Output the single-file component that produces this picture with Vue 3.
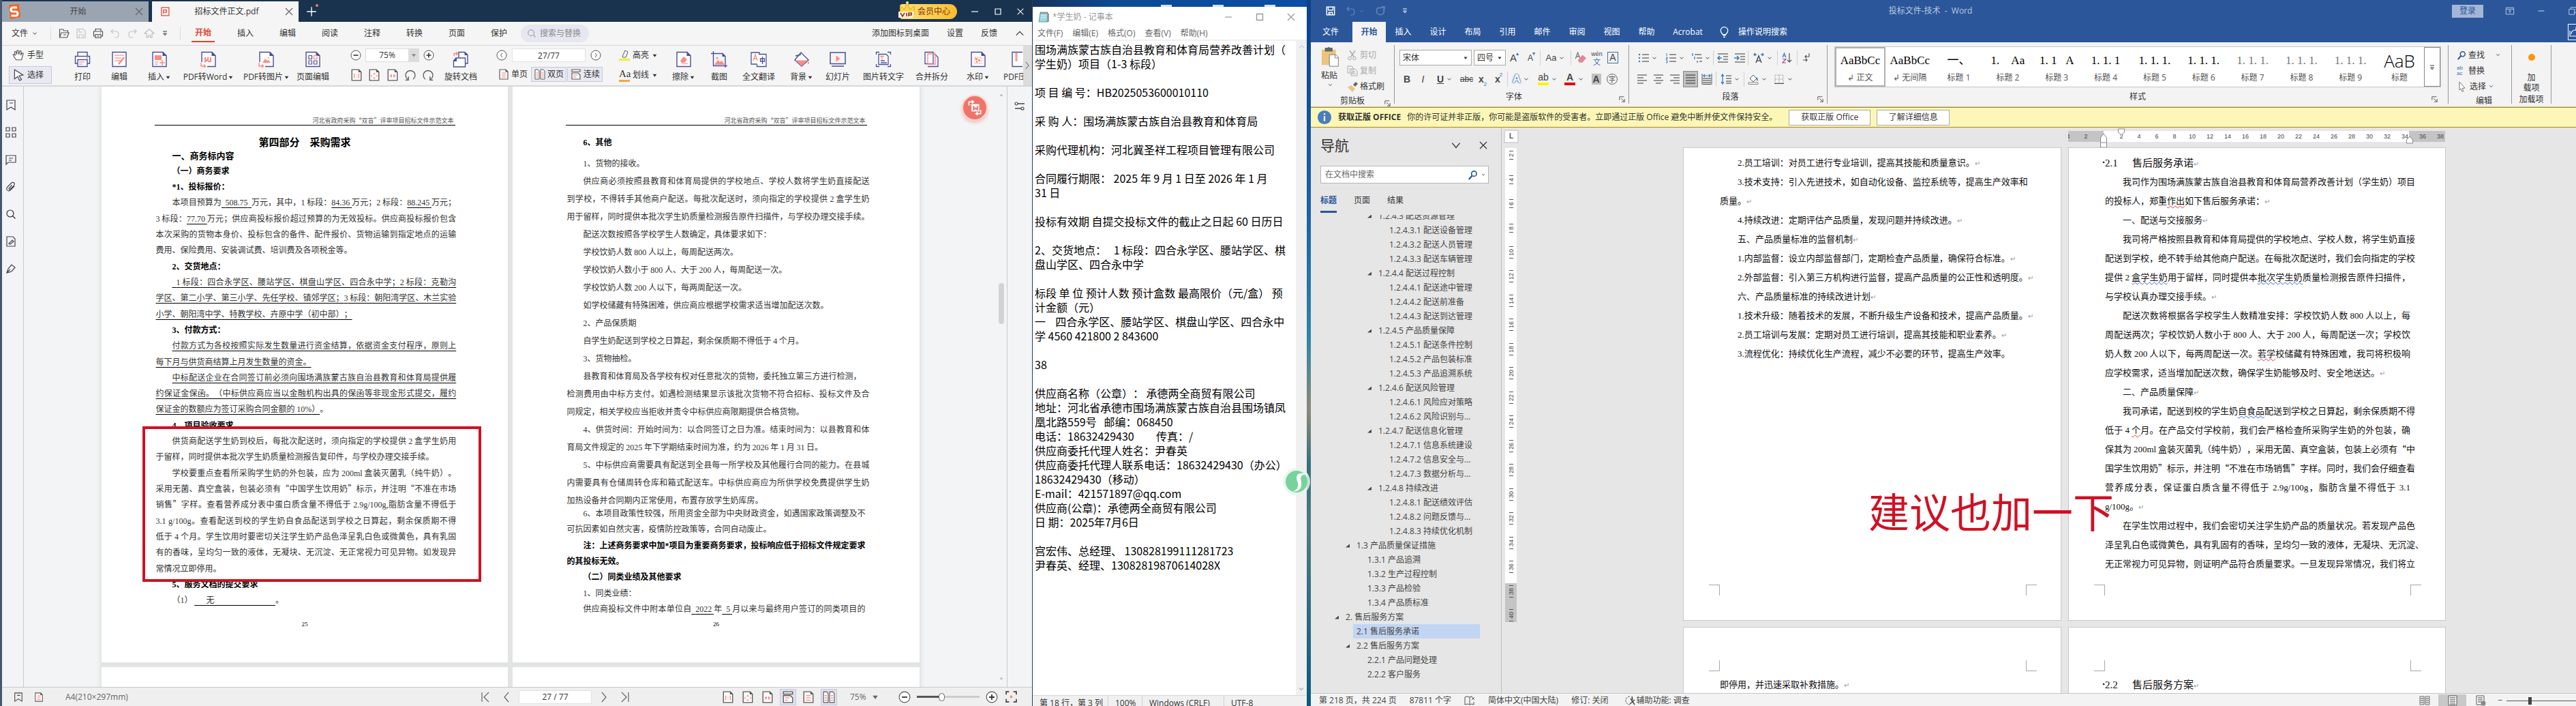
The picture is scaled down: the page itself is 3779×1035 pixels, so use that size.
<script setup>
import { h } from 'vue'

const P = '#4a4f9b'
const R = '#ff8a80'
const G = '#5a5a5a'
const B = '#3c7ab8'

const sheet = `<path d="M2 1.5h15l5 5v16H2z" fill="#fff" stroke="${P}" stroke-width="1.4"/><path d="M16.500 1l6 6h-6z" fill="${P}"/>`
const small = `<path d="M2 1h9l3 3v11H2z" fill="#fff" stroke="${G}" stroke-width="1.2"/><path d="M10.500 .5l4 4h-4z" fill="${G}"/>`
const rows = (x, w, ys, c) => ys.map(y => `<path d="M${x} ${y}h${w}" stroke="${c}" stroke-width="1.200"/>`).join('')

const icons = {
  logo: '<path d="M4 2l15-1 2 19-15 3z" fill="#f26522"/><path d="M16 6H10q-3 0-3 3t3 3h4q3 0 3 3t-3 3H7.500" fill="none" stroke="#fff" stroke-width="3"/>',
  pdf: '<path d="M2.500 1.500h11l3 0v15h-14z" fill="#fff" stroke="#e8412f" stroke-width="1.600"/><path d="M6 13V6h6v4H7M12 6v4" fill="none" stroke="#e8412f" stroke-width="1.600"/>',
  close: '<path d="M3 3l10 10M13 3L3 13" stroke="currentColor" stroke-width="1.200"/>',
  plus: '<path d="M8 2v12M2 8h12" stroke="currentColor" stroke-width="1.200"/>',
  min: '<path d="M3 8h10" stroke="currentColor" stroke-width="1.200"/>',
  max: '<path d="M4 4h8v8H4z" fill="none" stroke="currentColor" stroke-width="1.200"/>',
  restore: '<path d="M2 5h9v9H2zM5 5V2h9v9h-3" fill="none" stroke="currentColor"/>',
  ribbonopt: '<path d="M1.500 2.500h13v11h-13zM1.500 5h13M8 12V7M5.500 9L8 6.500 10.500 9" fill="none" stroke="currentColor"/>',
  chev: '<path d="M4 6l4 4 4-4" fill="none" stroke="currentColor" stroke-width="1.600"/>',
  thin: '<path d="M3 5l5 6 5-6" fill="none" stroke="currentColor" stroke-width="1.200"/>',
  chevUp: '<path d="M2 11l6-6 6 6" fill="none" stroke="currentColor" stroke-width="1.400"/>',
  chevL: '<path d="M11 1L5 8l6 7" fill="none" stroke="currentColor" stroke-width="1.200"/>',
  chevR: '<path d="M5 1l6 7-6 7" fill="none" stroke="currentColor" stroke-width="1.200"/>',
  first: '<path d="M13 1L6 8l7 7M3 1v14" fill="none" stroke="currentColor" stroke-width="1.200"/>',
  last: '<path d="M3 1l7 7-7 7M13 1v14" fill="none" stroke="currentColor" stroke-width="1.200"/>',
  tri: '<path d="M3 5h10l-5 7z" fill="currentColor"/>',
  triUp: '<path d="M3 12h10L8 5z" fill="currentColor"/>',
  node: '<path d="M14 3v10H2z" fill="currentColor"/>',
  open: '<path d="M1.500 14V2h5l1 2h6v3M1.500 14L4 7h11l-2.500 7zM7 10h4" fill="none" stroke="#555" stroke-width="1.200"/>',
  save: '<path d="M2 1.500h9l3 3v10H2zM5 2v4h5M5 14v-4h6v4" fill="none" stroke="currentColor" stroke-width="1.200"/>',
  print: '<path d="M4 5V1.500h8V5M4 12H1.500V5h13v7H12M4 9.500h8v5H4zM6 12h4M11 7h1" fill="none" stroke="#555" stroke-width="1.200"/>',
  undo: '<path d="M5 2L2 5l3 3M2 5h7q4 0 4 4.500T9 14H7" fill="none" stroke="currentColor" stroke-width="1.200"/>',
  redo: '<path d="M11 2l3 3-3 3M14 5H7q-4 0-4 4.500T7 14h2" fill="none" stroke="currentColor" stroke-width="1.200"/>',
  repeat: '<path d="M10 2h4v4M13.500 2.500Q9 4 4 3.500 1 8 4 12q4 3.500 8 0 3-4 0-7" fill="none" stroke="currentColor" stroke-width="1.600"/>',
  home: '<path d="M1 8l7-6.500L15 8h-3v6H9.500v-3h-3v3H4V8z" fill="none" stroke="#bbb" stroke-width="1.200"/>',
  custom: '<path d="M4 4h8M5 8h6l-3 4z" fill="none" stroke="currentColor" stroke-width="1.300"/>',
  lens: '<circle cx="7" cy="7" r="5" fill="none" stroke="currentColor" stroke-width="1.200"/><path d="M10.500 10.500l4 4" stroke="currentColor" stroke-width="1.200"/>',
  lensBlue: `<circle cx="10" cy="6" r="4" fill="none" stroke="#2b579a" stroke-width="1.800"/><path d="M7 9l-5 6" stroke="#2b579a" stroke-width="2.500"/>`,
  hand: '<path d="M5 14Q2 10 1 7q1.500-1 3 1.500L3 3.500q1.300-1 2 .5l1 3L6 2q1.500-1 2 .3L8.500 7 10 2.500q1.500-.5 1.600 1L11 8l2-3q1.500 0 1.200 1.500L12 14z" fill="#fff" stroke="#555"/>',
  arrow: '<path d="M3 1l11 7-5 1 3 5-2.500 1L7 10l-4 3z" fill="#fff" stroke="#555" stroke-width="1.200"/>',
  bPrint: `<path d="M5 8V1.500h14V8M5 18H1.500V7.500h21V18H19M5 12.500h14v10H5z" fill="#fff" stroke="${P}" stroke-width="1.400"/><path d="M18 10h2" stroke="${P}"/>${rows(7, 8, [16], R)}${rows(7, 5, [19], R)}`,
  bEdit: `<path d="M2 1.500h20v21H2z" fill="#fff" stroke="${P}" stroke-width="1.400"/>${rows(5, 14, [6], R)}${rows(5, 10, [10, 14], R)}<path d="M11 19l8-10" stroke="${R}" stroke-width="2.500"/>`,
  bInsert: `${sheet}<path d="M5 6h10v7H5z" fill="${R}"/>${rows(5, 5, [16, 19], R)}<path d="M12 17h8M16 13v8" stroke="${R}" stroke-width="1.500"/>`,
  bWord: `<path d="M2 16V1.500h15l5 5v16H10" fill="#fff" stroke="${P}" stroke-width="1.400"/><path d="M16.500 1l6 6h-6z" fill="${P}"/><path d="M7 9v6l3-2 2 2 3 0V9M11 9v5" fill="none" stroke="${R}" stroke-width="2.200"/><path d="M1 17v5h6M5 19.500L7.500 22 5 24" fill="none" stroke="${R}" stroke-width="1.400"/>`,
  bPic: `<path d="M2 16V1.500h15l5 5v16H10" fill="#fff" stroke="${P}" stroke-width="1.400"/><path d="M16.500 1l6 6h-6z" fill="${P}"/><path d="M6 17l4-6 3 3 2-1 3 4z" fill="${R}"/><circle cx="15" cy="10" r="1" fill="${R}"/><path d="M1 17v5h6M5 19.500L7.500 22 5 24" fill="none" stroke="${R}" stroke-width="1.400"/>`,
  bGrid: `${sheet}<path d="M6 6.500h4.500v5H6zM6 14h4.500v5H6zM13.500 14H18v5h-4.500z" fill="none" stroke="${P}" stroke-width="1.200"/><path d="M13.500 6.500H18v5h-4.500z" fill="none" stroke="${R}" stroke-width="1.200"/>`,
  bRotate: `<path d="M9 9V1.500h9l4 4V18h-3" fill="#fff" stroke="${P}" stroke-width="1.400"/><path d="M17.500 1l5 5h-5z" fill="${P}"/><path d="M1.500 14V23h17V10H5z" fill="#fff" stroke="${P}" stroke-width="1.400"/><path d="M6 9.500L1 15h5z" fill="${P}"/><path d="M2 7V3.500h5M5 1l2.500 2.500L5 6" fill="none" stroke="${R}" stroke-width="1.400"/>`,
  bErase: `${sheet}<path d="M7 14l5-6 5 4-4 5H9z" fill="${R}"/><path d="M9 18.500h9" stroke="${R}"/>`,
  bCrop: `<path d="M3.500 0v21.500H24M0 3.500h17l4 4V24" fill="none" stroke="${P}" stroke-width="1.400"/><path d="M16.500 3l5 5h-5z" fill="${P}"/><path d="M5 20l5-7 3 3 3-2 4 6z" fill="${R}"/><circle cx="9" cy="10" r="1.500" fill="${R}"/>`,
  bTrans: `<path d="M1 2h12v17H1z" fill="#fff" stroke="${P}" stroke-width="1.300"/><path d="M12 4.500h11v18H9.500v-3" fill="#fff" stroke="${P}" stroke-width="1.300"/><path d="M4 14L7 5l3 9M5 11h4" fill="none" stroke="${R}" stroke-width="1.300"/><path d="M14.500 11h6v4h-6zM17.500 8v11" fill="none" stroke="${P}" stroke-width="1.300"/>`,
  bFill: `<path d="M11 2l11 11-10 9L2 13z" fill="#fff" stroke="${P}" stroke-width="1.400"/><path d="M3 13.500h18L12 22z" fill="${R}"/><path d="M3 7l8-2" stroke="${P}" stroke-width="1.400"/><path d="M22 15q2 3 0 4-2-1 0-4" fill="${R}"/>`,
  bSlide: `<path d="M1 2h22v16.500H1zM3 22h18" fill="none" stroke="${P}" stroke-width="1.500"/><path d="M9.500 6.500l6 4.500-6 4.500z" fill="${R}"/>`,
  bOcr: `<path d="M5 4.500h11l3 3v12H5z" fill="#fff" stroke="${P}" stroke-width="1.300"/><path d="M1.500 5V1.500H6M18 1.500h4.500V5M1.500 19v3.500H6M18 22.500h4.500V19M8 14h6M8 17h9" fill="none" stroke="${P}" stroke-width="1.300"/><path d="M7 7.500h6M10 7.500V12" stroke="${R}" stroke-width="1.300"/>`,
  bMerge: `<path d="M2 1.500h12v17H2z" fill="#fff" stroke="${P}" stroke-width="1.300"/><path d="M15 3l6 6v13.500H6" fill="none" stroke="${P}" stroke-width="1.300"/><path d="M6 4h11v15H6z" fill="none" stroke="${R}" stroke-width="1.300"/>`,
  bMark: `${sheet}<path d="M7 9h10v9H7z" fill="none" stroke="${R}" stroke-dasharray="2 1.500"/><path d="M8 10h3v3H8zM12 12h3v3h-3zM9 14h2v3H9z" fill="${R}"/>`,
  bZip: `<path d="M17 1.500H2v21h15" fill="#fff" stroke="${P}" stroke-width="1.400"/><path d="M8 2v13M6 4h4M6 7h4M6 10h4M6 13h4" stroke="${R}" stroke-width="1.300"/>`,
  minusC: '<circle cx="8" cy="8" r="7" fill="#fff" stroke="#555"/><path d="M4.500 8h7" stroke="#333" stroke-width="1.600"/>',
  plusC: '<circle cx="8" cy="8" r="7" fill="#fff" stroke="#555"/><path d="M4.500 8h7M8 4.500v7" stroke="#333" stroke-width="1.600"/>',
  prevC: '<circle cx="8" cy="8" r="7" fill="#fff" stroke="#555"/><path d="M9 5L6.500 8 9 11" fill="none" stroke="#555"/>',
  nextC: '<circle cx="8" cy="8" r="7" fill="#fff" stroke="#555"/><path d="M7 5l2.500 3L7 11" fill="none" stroke="#555"/>',
  one: `${small}<path d="M5 6v6M8 7.500v1M8 10v1M11 6v6" stroke="${R}" stroke-width="1.200"/>`,
  fit: `${small}<path d="M8 5l2 2H6zM8 13l2-2H6zM5 7v4L3.500 9zM11 7v4L12.500 9z" fill="${R}"/>`,
  wide: `${small}<path d="M7 6.500v5L4 9zM9 6.500v5L12 9z" fill="${R}"/>`,
  rotL: '<path d="M4.500 13.500A6.200 6.200 0 1 1 11.500 13.500M5.500 10v4.500H1.500" fill="none" stroke="#555" stroke-width="1.200"/>',
  rotR: '<path d="M4.500 13.500A6.200 6.200 0 1 1 11.500 13.500M10.500 10v4.500h4" fill="none" stroke="#555" stroke-width="1.200"/>',
  single: `${small}${rows(5, 6, [6, 9, 12], R)}`,
  double: `<path d="M1 1h4l2 2v12H1zM9 1h4l2 2v12H9z" fill="#fff" stroke="${G}"/>${rows(2.5, 3, [6, 9, 12], R)}${rows(10.5, 3, [6, 9, 12], R)}`,
  cont: `<path d="M2 1h12v3H2zM2 15V6h9l3 3v6z" fill="#fff" stroke="${G}" stroke-width="1.200"/>${rows(4, 6, [9], R)}${rows(4, 4, [12], R)}`,
  hilite: '<path d="M5 10l4-9 4 2-3 8H6z" fill="#fff" stroke="#555"/><path d="M0 14.500h16" stroke="#f4ef2e" stroke-width="3"/>',
  expand: `<path d="M1 5V1h4M11 1h4v4M1 11v4h4M11 15h4v-4" fill="none" stroke="#555" stroke-width="1.800"/><circle cx="8" cy="8" r="1.800" fill="${R}"/>`,
  bookmark: '<path d="M2 1h12v14l-6-4-6 4zM6 5h5" fill="none" stroke="#444" stroke-width="1.200"/>',
  thumbs: '<path d="M1 1h5v5H1zM10 1h5v5h-5zM1 10h5v5H1zM10 10h5v5h-5z" fill="none" stroke="#444" stroke-width="1.200"/>',
  note: '<path d="M1 15V2h14v10H4zM5 6h6M5 9h4" fill="none" stroke="#444" stroke-width="1.200"/>',
  clip: '<path d="M13 7l-6 6q-3 2-5-1-1-2 1-4l6-6q2-1.500 4 .5 1 2-.5 3.500l-5.500 5.500q-1.500.5-2-1l4.500-5" fill="none" stroke="#444" stroke-width="1.200"/>',
  sig: '<path d="M2 1h9l3 3v11H2zM5 11l5-5 2 2-5 4z" fill="none" stroke="#444" stroke-width="1.200"/>',
  pen: '<path d="M2 14l2-6 5-6 5 4-5 6zM2 14l5-5" fill="none" stroke="#444" stroke-width="1.200"/>',
  tune: '<path d="M5 5h10M1 12h9" stroke="#444" stroke-width="1.400"/><circle cx="3" cy="5" r="2" fill="#fff" stroke="#444" stroke-width="1.200"/><circle cx="12" cy="12" r="2" fill="#fff" stroke="#444" stroke-width="1.200"/>',
  toWord: '<path d="M4 9V4h6M8 2l2.500 2L8 6M20 15v5h-6M16 18l-2.500 2 2.500 2" fill="none" stroke="#fff" stroke-width="1.500"/><path d="M6 8h2v8h10" fill="none" stroke="#fff"/><path d="M8 7h10v10H8z" fill="#fff"/><path d="M10.500 9.500v5l2.500-2 2.500 2v-5" fill="none" stroke="#ee7468" stroke-width="1.800"/>',
  notepad: '<path d="M3 2h11l-1 13H1z" fill="#9fd8e4" stroke="#5d9aa8"/><path d="M13 15l2-1V3" fill="none" stroke="#8a7a50" stroke-width="1.500"/><path d="M3 1.500h11" stroke="#555" stroke-width="2" stroke-dasharray="1 1"/><path d="M4 6h8M4 9h8" stroke="#d6f0f5"/>',
  swirl: '<circle cx="20" cy="20" r="20" fill="#e8f3ee" opacity=".85"/><circle cx="20" cy="20" r="16" fill="#77d39b"/><path d="M34 9q-13-4-14 5 0 4 2 8 2 9-8 13 14-1 13-11 0-5-1-8 0-6 8-7z" fill="#fff"/>',
  qSave: '<path d="M1.500 1.500h13v13h-13zM4 1.500v5h8v-5M5 14.500v-4h6v4M7 12v2" fill="none" stroke="#fff" stroke-width="1.600"/>',
  bulb: '<path d="M6 12h4M6.500 14.500h3M6 11Q3 8 3 5.500A5 5 0 0 1 13 5.500Q13 8 10 11z" fill="none" stroke="#fff" stroke-width="1.200"/>',
  share: '<path d="M2 6v8h10M4 11q0-6 7-6V2l4 4" fill="none" stroke="#fff" stroke-width="1.200"/>',
  paste: '<path d="M1 4h22v24H1z" fill="#ecc47c"/><path d="M6 1h4q2-2 4 0h4v6H6z" fill="#666"/><path d="M13 12h10l4 4v14H13z" fill="#fff" stroke="#777"/><path d="M22 12v5h5" fill="none" stroke="#777"/>',
  cut: '<path d="M4 1l6 9M12 1L6 10" stroke="#aaa" stroke-width="1.500"/><circle cx="4" cy="12.500" r="2.300" fill="none" stroke="#aaa"/><circle cx="11" cy="12.500" r="2.300" fill="none" stroke="#aaa"/>',
  copy: '<path d="M1 1h6l2 2v8H1zM6 5h6l3 3v7H6zM3 5h3M3 8h2M8 9h4M8 12h5" fill="none" stroke="#aaa"/>',
  brush: '<path d="M9 5l4-4 3 3-4 4z" fill="#666"/><path d="M1 9l5-3 6 5-4 5z" fill="#ecc47c"/>',
  erase: '<path d="M2 9L5 1l3 8M3 6h4" fill="none" stroke="#777" stroke-width="1.200"/><path d="M5 11l6-7 5 4-5 6H7z" fill="#e7849a"/>',
  bullets: `<circle cx="2" cy="3" r="1.200" fill="${B}"/><circle cx="2" cy="8" r="1.200" fill="${B}"/><circle cx="2" cy="13" r="1.200" fill="${B}"/>${rows(6, 10, [3, 8, 13], '#555')}`,
  numbers: `<path d="M2 1v4M1 7h2v2H1v1h2M1 12h2v3H1" fill="none" stroke="${B}"/>${rows(6, 10, [3, 8, 13], '#555')}`,
  multi: `<path d="M2 1v4M5 6v4M9 12v3" stroke="${B}" stroke-width="1.300"/>${rows(5, 10, [3], '#555')}${rows(8, 8, [8], '#555')}${rows(12, 4, [13], '#555')}`,
  outdent: `${rows(1, 15, [2, 14], '#555')}${rows(9, 7, [6, 10], '#555')}<path d="M7 8H1M4 5L1 8l3 3" fill="none" stroke="${B}" stroke-width="1.600"/>`,
  indent: `${rows(1, 15, [2, 14], '#555')}${rows(9, 7, [6, 10], '#555')}<path d="M0 8h6M4 5l3 3-3 3" fill="none" stroke="${B}" stroke-width="1.600"/>`,
  asian: `<path d="M4 15L8 5l4 10M5.500 12h5" fill="none" stroke="#555" stroke-width="1.600"/><path d="M5 3H1M3 1L1 3l2 2M11 3h4M13 1l2 2-2 2" fill="none" stroke="${B}" stroke-width="1.300"/>`,
  sort: `<path d="M1 7l2.500-6L6 7M2 5h3" fill="none" stroke="${B}" stroke-width="1.200"/><path d="M1 9.500h5L1 15h5" fill="none" stroke="#9b4fa8" stroke-width="1.200"/><path d="M11 1v13M8 11l3 3 3-3" fill="none" stroke="#555" stroke-width="1.200"/>`,
  marks: '<path d="M13 1v5H7M9 4L7 6l2 2M4 11h6M8 9l2 2-2 2" fill="none" stroke="#555" stroke-width="1.200"/>',
  alL: rows(1, 14, [2, 10], '#555') + rows(1, 9, [6, 14], '#555'),
  alC: rows(1, 14, [2, 10], '#555') + rows(4, 8, [6, 14], '#555'),
  alR: rows(1, 14, [2, 10], '#555') + rows(6, 9, [6, 14], '#555'),
  alJ: rows(1, 14, [2, 6, 10, 14], '#444'),
  alD: `${rows(2, 12, [7, 10, 13, 15.5], '#555')}<path d="M1 0v16M15 0v16" stroke="#555"/><path d="M2 3h12M5 1L3 3l2 2M11 1l2 2-2 2" fill="none" stroke="${B}" stroke-width="1.200"/>`,
  spacing: `${rows(8, 8, [3, 7, 11, 14], '#555')}<path d="M3 1v14M1 4l2-3 2 3M1 12l2 3 2-3" fill="none" stroke="${B}" stroke-width="1.300"/>`,
  shade: `<path d="M3 7l5-5 5 5-5 5z" fill="#fff" stroke="#555"/><path d="M13 5q3 3 1 6-2-2-1-6" fill="${B}"/><path d="M1 13h14v2.500H1z" fill="#fff" stroke="#888"/>`,
  borders: '<path d="M2 2h12v12H2zM8 2v12M2 8h12" fill="none" stroke="#777" stroke-dasharray="1 1.500"/><path d="M1 14.500h14" stroke="#444"/>',
  launch: '<path d="M1 7V1h8M4 4l6 6M10 5v5H5" fill="none" stroke="#555" stroke-width="1.200"/>',
  pointer: '<path d="M4 1l8 9-4 .5 2 4-2 .8-2-4.300-2 2z" fill="#fff" stroke="#777"/>',
  spell: '<path d="M1 3q4-2 7 0v11q-3-2-7 0zM8 3q2-1 4-1M8 14q3-2 6 0v-4M11 3l4 4M15 3l-4 4" fill="none" stroke="#555"/>',
  access: '<path d="M7 2a6 6 0 1 0 0 12" fill="none" stroke="#555" stroke-dasharray="3 1"/><path d="M8 5l6 9M14 7l-7 6M10 2l1 5" stroke="#444" stroke-width="1.500"/>',
  read: `<path d="M1 2h6v12H1zM9 2h6v12H9z" fill="none" stroke="#666"/>${rows(2, 4, [5, 8, 11], '#666')}${rows(10, 4, [5, 8, 11], '#666')}`,
  layout: `<path d="M2 1h12v14H2z" fill="#fff" stroke="#555"/>${rows(4, 8, [4, 7, 10, 13], '#555')}`,
  web: `<path d="M2 1h11v13H2z" fill="#fff" stroke="#555"/>${rows(4, 7, [4, 7, 10], '#555')}<circle cx="12" cy="12" r="3.500" fill="#888"/>`,
  info: '<circle cx="12" cy="12" r="11" fill="#4a7cc0"/><path d="M12 10v8M12 5.500v2.500" stroke="#fff" stroke-width="2.500"/>',
  crown: '<path d="M2 20L3 8l6 5 4-11 4 11 6-5 1 12z" fill="#ffd24a" stroke="#e2a416"/><circle cx="13" cy="3" r="2" fill="#ffe79a"/><path d="M0 16h24l-3 9H0z" fill="#fdf1dc"/><path d="M3 18l3 5 3-5M12 18v5M15 23v-5h4v3h-4" fill="none" stroke="#8a3a10" stroke-width="1.600"/>'
}

const boxes = { logo: 24, swirl: 40, paste: 32, info: 24, crown: 26, toWord: 24, pdf: 18, launch: 11 }
const Icon = ({ n, s }) => {
  const v = boxes[n] || (/^b[A-Z]/.test(n) ? 24 : 16)
  return h('svg', { viewBox: `0 0 ${v} ${v}`, width: s || 16, height: s || 16, 'aria-hidden': 'true', innerHTML: icons[n] })
}
Icon.props = ['n', 's']

/* Splits a line into styled runs: [u:..] underline, [r:..] red wave, [b:..] blue wave. */
const runs = text => {
  const out = []
  for (const part of text.split(/(\[[urb]:[^\]]*\])/)) {
    if (!part) continue
    const m = part.match(/^\[([urb]):([^\]]*)\]$/)
    const body = m ? m[2] : part
    for (const piece of body.split(/([!-~]+(?: [!-~]+)*)/)) {
      if (piece) out.push({ t: piece, c: [m ? 'k-' + m[1] : '', /^[!-~]/.test(piece) ? 'lat' : ''] })
    }
  }
  return out
}
const Line = ({ t }) => runs(t).map(r => h('span', { class: r.c }, r.t))
Line.props = ['t']

const foxitMenu = ['开始', '插入', '编辑', '阅读', '注释', '转换', '页面', '保护']
const toolsA = [
  { i: 'bPrint', t: '打印', w: 54 }, { i: 'bEdit', t: '编辑', w: 54 }, { i: 'bInsert', t: '插入', d: 1, w: 64 },
  { i: 'bWord', t: 'PDF转Word', d: 1, w: 80 }, { i: 'bPic', t: 'PDF转图片', d: 1, w: 90 }, { i: 'bGrid', t: '页面编辑', w: 46 }
]
const toolsB = [
  { i: 'bErase', t: '擦除', d: 1, w: 50 }, { i: 'bCrop', t: '截图', w: 54 }, { i: 'bTrans', t: '全文翻译', w: 62 },
  { i: 'bFill', t: '背景', d: 1, w: 64 }, { i: 'bSlide', t: '幻灯片', w: 42 }, { i: 'bOcr', t: '图片转文字', w: 92 },
  { i: 'bMerge', t: '合并拆分', w: 50 }, { i: 'bMark', t: '水印', d: 1, w: 86 }, { i: 'bZip', t: 'PDF压缩', w: 34 }
]
const rail = ['bookmark', 'thumbs', 'note', 'clip', 'lens', 'sig', 'pen']

/* i: first-line indent, j: fills the measure, b: bold, u: whole line underlined */
const left = [
  { t: '（一）商务要求', i: 1, b: 1 },
  { t: '*1、投标报价：', i: 1, b: 1 },
  { t: '本项目预算为[u:\u00a0\u00a0508.75\u00a0\u00a0]万元，其中，1 标段：[u:84.36\u00a0]万元；2 标段：[u:88.245\u00a0]万元；', i: 1, j: 1 },
  { t: '3 标段：[u:77.70\u00a0]万元；供应商投标报价超过预算的为无效投标。供应商投标报价包含', j: 1 },
  { t: '本次采购的货物本身价、投标包含的备件、配件报价、货物运输到指定地点的运输', j: 1 },
  { t: '费用、保险费用、安装调试费、培训费及各项税金等。' },
  { t: '2、交货地点：', i: 1, b: 1 },
  { t: '\u00a0\u00a01 标段：四合永学区、腰站学区、棋盘山学区、四合永中学；2 标段：克勒沟', i: 1, j: 1, u: 1 },
  { t: '学区、第二小学、第三小学、先任学校、镇郊学区；3 标段：朝阳湾学区、木兰实验', j: 1, u: 1 },
  { t: '小学、朝阳湾中学、特教学校、卉原中学（初中部）；', u: 1 },
  { t: '3、付款方式：', i: 1, b: 1 },
  { t: '付款方式为各校按照实际发生数量进行资金结算，依据资金支付程序，原则上', i: 1, j: 1, u: 1 },
  { t: '每下月与供货商结算上月发生数量的资金。', u: 1 },
  { t: '中标配送企业在合同签订前必须向围场满族蒙古族自治县教育和体育局提供履', i: 1, j: 1, u: 1 },
  { t: '约保证金保函。（中标供应商应当以金融机构出具的保函等非现金形式提交，履约', j: 1, u: 1 },
  { t: '[u:保证金的数额应为签订采购合同金额的 10%）]。' },
  { t: '4、项目验收要求', i: 1, b: 1 },
  { t: '供货商配送学生奶到校后，每批次配送时，须向指定的学校提供 2 盒学生奶用', i: 1, j: 1 },
  { t: '于留样，同时提供本批次学生奶质量检测报告复印件，与学校办理交接手续。' },
  { t: '学校要重点查看所采购学生奶的外包装，应为 200ml 盒装灭菌乳（纯牛奶）。', i: 1, j: 1 },
  { t: '采用无菌、真空盒装，包装必须有“中国学生饮用奶”标示，并注明“不准在市场', j: 1 },
  { t: '销售”字样。查看营养成分表中蛋白质含量不得低于 2.9g/100g,脂肪含量不得低于', j: 1 },
  { t: '3.1 g/100g。查看配送到校的学生奶自食品配送到学校之日算起，剩余保质期不得', j: 1 },
  { t: '低于 4 个月。学生饮用时要密切关注学生奶产品色泽呈乳白色或微黄色，具有乳固', j: 1 },
  { t: '有的香味，呈均匀一致的液体，无凝块、无沉淀、无正常视力可见异物。如发现异', j: 1 },
  { t: '常情况立即停用。' },
  { t: '5、服务文档的提交要求', i: 1, b: 1 },
  { t: '（1） [u:\u3000\u00a0\u00a0无\u3000\u3000\u3000\u3000\u3000\u3000\u3000\u00a0\u00a0]。', i: 1 }
]
const rightA = [
  { t: '1、货物的接收。', i: 1 },
  { t: '供应商必须按照县教育和体育局提供的学校地点、学校人数将学生奶直接配送', i: 1, j: 1 },
  { t: '到学校，不得转手其他商户配送。每批次配送时，须向指定的学校提供 2 盒学生奶', j: 1 },
  { t: '用于留样，同时提供本批次学生奶质量检测报告原件扫描件，与学校办理交接手续。' },
  { t: '配送次数按照各学校学生人数确定，具体要求如下：', i: 1 },
  { t: '学校饮奶人数 800 人以上，每周配送两次。', i: 1 },
  { t: '学校饮奶人数小于 800 人、大于 200 人，每周配送一次。', i: 1 },
  { t: '学校饮奶人数 200 人以下，每两周配送一次。', i: 1 },
  { t: '如学校储藏有特殊困难，供应商应根据学校需求适当增加配送次数。', i: 1 },
  { t: '2、产品保质期', i: 1 },
  { t: '自学生奶配送到学校之日算起，剩余保质期不得低于 4 个月。', i: 1 },
  { t: '3、货物抽检。', i: 1 },
  { t: '县教育和体育局及各学校有权对任意批次的货物，委托独立第三方进行检测，', i: 1 },
  { t: '检测费用由中标方支付。如遇检测结果显示该批次货物不符合招标、投标文件及合', j: 1 },
  { t: '同规定，相关学校应当拒收并责令中标供应商限期提供合格货物。' },
  { t: '4、供货时间：开始时间为：以合同签订之日为准。结束时间为：以县教育和体', i: 1, j: 1 },
  { t: '育局文件规定的 2025 年下学期结束时间为准，约为 2026 年 1 月 31 日。' },
  { t: '5、中标供应商需要具有配送到全县每一所学校及其他履行合同的能力。在县城', i: 1, j: 1 },
  { t: '内需要具有仓储周转仓库和箱式配送车。中标供应商应为所供学校免费提供学生奶', j: 1 },
  { t: '加热设备并合同期内正常使用，布置存放学生奶库房。' }
]
const rightB = [
  { t: '6、本项目政策性较强，所用资金全部为中央财政资金，如遇国家政策调整及不', i: 1, j: 1 },
  { t: '可抗因素如自然灾害，疫情防控政策等，合同自动废止。' },
  { t: '注：上述商务要求中加*项目为重要商务要求，投标响应低于招标文件规定要求', i: 1, j: 1, b: 1 },
  { t: '的其投标无效。', b: 1 },
  { t: '（二）同类业绩及其他要求', i: 1, b: 1 },
  { t: '1、同类业绩：', i: 1 },
  { t: '供应商投标文件中附本单位自[u:\u00a0\u00a02022\u00a0]年[u:\u00a0\u00a05\u00a0]月以来与最终用户签订的同类项目的', i: 1, j: 1 }
]
const lineClass = l => ({ ind: l.i, jus: l.j, bold: l.b, und: l.u })

const note = `围场满族蒙古族自治县教育和体育局营养改善计划（
学生奶）项目（1-3 标段）

项 目 编 号：HB2025053600010110

采 购 人：围场满族蒙古族自治县教育和体育局

采购代理机构：河北冀圣祥工程项目管理有限公司

合同履行期限： 2025 年 9 月 1 日至 2026 年 1 月
31 日

投标有效期 自提交投标文件的截止之日起 60 日历日

2、交货地点：   1 标段：四合永学区、腰站学区、棋
盘山学区、四合永中学

标段 单 位 预计人数 预计盒数 最高限价（元/盒） 预
计金额（元）
一    四合永学区、腰站学区、棋盘山学区、四合永中
学 4560 421800 2 843600

38

供应商名称（公章）： 承德两全商贸有限公司
地址：河北省承德市围场满族蒙古族自治县围场镇凤
凰北路559号   邮编：068450
电话：18632429430         传真：/
供应商委托代理人姓名：尹春英
供应商委托代理人联系电话：18632429430（办公）
18632429430（移动）
E-mail：421571897@qq.com
供应商(公章)：承德两全商贸有限公司
日 期：2025年7月6日

宫宏伟、总经理、 130828199111281723
尹春英、经理、13082819870614028X`

const wordTabs = ['文件', '开始', '插入', '设计', '布局', '引用', '邮件', '审阅', '视图', '帮助', 'Acrobat']
const paraA = [
  { i: 'bullets', w: 40, d: 1 }, { i: 'numbers', w: 40, d: 1 }, { i: 'multi', w: 36, d: 1 }, { sep: 1 },
  { i: 'outdent', w: 26 }, { i: 'indent', w: 24 }, { sep: 1 }, { i: 'asian', w: 42, d: 1 }, { sep: 1 },
  { i: 'sort', w: 28 }, { sep: 1 }, { i: 'marks', w: 24 }
]
const paraB = [
  { i: 'alL', w: 24 }, { i: 'alC', w: 24 }, { i: 'alR', w: 24 }, { i: 'alJ', w: 22, on: 1 }, { i: 'alD', w: 26 }, { sep: 1 },
  { i: 'spacing', w: 40, d: 1 }, { sep: 1 }, { i: 'shade', w: 38, d: 1 }, { i: 'borders', w: 38, d: 1 }
]
const styles = [
  { p: 'AaBbCc', t: '↲ 正文', on: 1 }, { p: 'AaBbCc', t: '↲ 无间隔' }, { p: '一、', t: '标题 1' }, { p: '1.\u00a0\u00a0\u00a0\u00a0Aa', t: '标题 2' },
  { p: '1. 1\u00a0\u00a0\u00a0A', t: '标题 3' }, { p: '1. 1. 1', t: '标题 4' }, { p: '1. 1. 1.', t: '标题 5' }, { p: '1. 1. 1.', t: '标题 6' },
  { p: '1. 1. 1.', t: '标题 7', g: 1 }, { p: '1. 1. 1.', t: '标题 8', g: 1 }, { p: '1. 1. 1.', t: '标题 9', g: 1 }, { p: 'AaB', t: '标题', big: 1 }
]
const tree = [
  ['1.2.4.3 配送资源管理', 4, 1], ['1.2.4.3.1 配送设备管理', 5], ['1.2.4.3.2 配送人员管理', 5], ['1.2.4.3.3 配送车辆管理', 5],
  ['1.2.4.4 配送过程控制', 4, 1], ['1.2.4.4.1 配送途中管理', 5], ['1.2.4.4.2 配送前准备', 5], ['1.2.4.4.3 配送到达管理', 5],
  ['1.2.4.5 产品质量保障', 4, 1], ['1.2.4.5.1 配送条件控制', 5], ['1.2.4.5.2 产品包装标准', 5], ['1.2.4.5.3 产品追溯系统', 5],
  ['1.2.4.6 配送风险管理', 4, 1], ['1.2.4.6.1 风险应对策略', 5], ['1.2.4.6.2 风险识别与...', 5],
  ['1.2.4.7 配送信息化管理', 4, 1], ['1.2.4.7.1 信息系统建设', 5], ['1.2.4.7.2 信息安全与...', 5], ['1.2.4.7.3 数据分析与...', 5],
  ['1.2.4.8 持续改进', 4, 1], ['1.2.4.8.1 配送绩效评估', 5], ['1.2.4.8.2 问题反馈与...', 5], ['1.2.4.8.3 持续优化机制', 5],
  ['1.3 产品质量保证措施', 2, 1], ['1.3.1 产品追溯', 3], ['1.3.2 生产过程控制', 3], ['1.3.3 产品检验', 3], ['1.3.4 产品质标准', 3],
  ['2. 售后服务方案', 1, 1], ['2.1 售后服务承诺', 2, 0, 1], ['2.2 售后服务方案', 2, 1], ['2.2.1 产品问题处理', 3], ['2.2.2 客户服务', 3]
].map(([t, l, open, on]) => ({ t, l, open, on }))

const hRuler = [4, 2, '', ...Array.from({ length: 19 }, (_, i) => i * 2 + 2)]
const vRuler = Array.from({ length: 20 }, (_, i) => i * 2 + 2)

const wordL = [
  { t: '2.员工培训：对员工进行专业培训，提高其技能和质量意识。', i: 1, e: 1 },
  { t: '3.技术支持：引入先进技术，如自动化设备、监控系统等，提高生产效率和', i: 1, j: 1 },
  { t: '质量。', e: 1 },
  { t: '4.持续改进：定期评估产品质量，发现问题并持续改进。', i: 1, e: 1 },
  { t: '五、产品质量标准的监督机制', i: 1, e: 1 },
  { t: '1.内部监督：设立内部监督部门，定期检查产品质量，确保符合标准。', i: 1, e: 1 },
  { t: '2.外部监督：引入第三方机构进行监督，提高产品质量的公正性和透明度。', i: 1, e: 1 },
  { t: '六、产品质量标准的持续改进计划', i: 1, e: 1 },
  { t: '1.技术升级：随着技术的发展，不断升级生产设备和技术，提高产品质量。', i: 1, e: 1 },
  { t: '2.员工培训与发展：定期对员工进行培训，提高其技能和职业素养。', i: 1, e: 1 },
  { t: '3.流程优化：持续优化生产流程，减少不必要的环节，提高生产效率。', i: 1 }
]
const wordR = [
  { t: '我司作为围场满族蒙古族自治县教育和体育局营养改善计划（学生奶）项目', i: 1, j: 1 },
  { t: '的投标人，郑重[r:作出]如下售后服务承诺：', e: 1 },
  { t: '一、配送与交接服务', i: 1, e: 1 },
  { t: '我司将严格按照县教育和体育局提供的学校地点、学校人数，将学生奶直接', i: 1, j: 1 },
  { t: '配送到学校，绝不转手给其他商户配送。在每批次配送时，我们会向指定的学校', j: 1 },
  { t: '提供 2 [b:盒学生奶]用于留样，同时提供本[b:批次学生奶]质量检测报告原件扫描件，', j: 1 },
  { t: '与学校认真办理交接手续。', e: 1 },
  { t: '配送次数将根据各学校学生人数精准安排：学校饮奶人数 800 人以上，每', i: 1, j: 1 },
  { t: '周配送两次；学校饮奶人数小于 800 人、大于 200 人，每周配送一次；学校饮', j: 1 },
  { t: '奶人数 200 人以下，每两周配送一次。[r:若学]校储藏有特殊困难，我司将积极响', j: 1 },
  { t: '应学校需求，适当增加配送次数，确保学生奶能够及时、安全地送达。', e: 1 },
  { t: '二、产品质量保障', i: 1, e: 1 },
  { t: '我司承诺，配送到校的学生奶[b:自食品]配送到学校之日算起，剩余保质期不得', i: 1, j: 1 },
  { t: '低于 4 [r:个]月。在产品交付学校前，我们会严格检查所采购学生奶的外包装，确', j: 1 },
  { t: '保其为 200ml 盒装灭菌乳（纯牛奶），采用无菌、真空盒装，包装上必须有“中', j: 1 },
  { t: '国学生饮用奶”标示，并注明“不准在市场销售”字样。同时，我们会仔细查看', j: 1 },
  { t: '营养成分表，保证蛋白质含量不得低于 2.9g/100g，脂肪含量不得低于 3.1', j: 1 },
  { t: 'g/100g。', e: 1 },
  { t: '在学生饮用过程中，我们会密切关注学生奶产品的质量状况。若发现产品色', i: 1, j: 1 },
  { t: '泽呈乳白色或微黄色，具有乳固有的香味，呈均匀一致的液体，无凝块、无沉淀、', j: 1 },
  { t: '无正常视力可见异物，则证明产品符合质量要求。一旦发现异常情况，我们将立', j: 1 }
]
</script>

<template>
  <main class="desk">
    <section class="fx" aria-label="PDF">
      <header class="fx-title">
        <button class="fx-tab"><Icon n="logo" :s="24" /><span>开始</span><Icon n="close" /></button>
        <button class="fx-tab on"><Icon n="pdf" :s="14" /><span>招标文件正文.pdf</span><Icon n="close" /></button>
        <button class="fx-new" aria-label="新建"><Icon n="plus" :s="18" /><i></i></button>
        <div class="fx-win">
          <button class="vip"><Icon n="crown" :s="26" /><span>会员中心</span></button>
          <button aria-label="最小化"><Icon n="min" /></button>
          <button aria-label="最大化"><Icon n="max" /></button>
          <button aria-label="关闭"><Icon n="close" :s="14" /></button>
        </div>
      </header>
      <nav class="fx-menu">
        <button class="file">文件<Icon n="chev" :s="10" /></button>
        <div class="quick">
          <button aria-label="打开"><Icon n="open" /></button>
          <button aria-label="保存" class="off"><Icon n="save" /></button>
          <button aria-label="打印"><Icon n="print" /></button>
          <button aria-label="撤销" class="off"><Icon n="undo" /></button>
          <button aria-label="重做" class="off"><Icon n="redo" /></button>
          <button aria-label="主页"><Icon n="home" /></button>
          <button aria-label="更多"><Icon n="custom" :s="12" /></button>
        </div>
        <button v-for="(m, i) in foxitMenu" :key="m" class="m" :class="{ on: i === 0 }">{{ m }}</button>
        <label class="pill"><Icon n="lens" :s="14" /><input placeholder="搜索与替换" aria-label="搜索与替换"></label>
        <div class="fx-right"><button>添加图标到桌面</button><button>设置</button><button>反馈</button><button aria-label="收起"><Icon n="chevUp" :s="14" /></button></div>
      </nav>
      <div class="fx-tools">
        <div class="pick"><button><Icon n="hand" :s="18" />手型</button><button class="on"><Icon n="arrow" :s="18" />选择</button></div>
        <button v-for="b in toolsA" :key="b.t" class="big" :style="{ width: b.w + 'px' }"><Icon :n="b.i" :s="24" /><span>{{ b.t }}<Icon v-if="b.d" n="tri" :s="9" /></span></button>
        <div class="zoomer">
          <div class="row"><button aria-label="缩小"><Icon n="minusC" /></button><span class="combo"><input value="75%" aria-label="缩放"><i><Icon n="tri" :s="10" /></i></span><button aria-label="放大"><Icon n="plusC" /></button></div>
          <div class="row"><button v-for="n in ['one', 'fit', 'wide', 'rotL', 'rotR']" :key="n" :aria-label="n"><Icon :n="n" :s="18" /></button></div>
        </div>
        <button class="big rot"><Icon n="bRotate" :s="24" /><span>旋转文档</span></button>
        <div class="pager">
          <div class="row"><button aria-label="上一页"><Icon n="prevC" /></button><input value="27/77" aria-label="页码"><button aria-label="下一页"><Icon n="nextC" /></button></div>
          <div class="row modes"><button><Icon n="single" />单页</button><button class="on"><Icon n="double" />双页</button><button class="on"><Icon n="cont" />连续</button></div>
        </div>
        <div class="pens"><button><Icon n="hilite" />高亮<Icon n="tri" :s="9" /></button><button><span class="aa">Aa</span>划线<Icon n="tri" :s="9" /></button></div>
        <button v-for="b in toolsB" :key="b.t" class="big" :style="{ width: b.w + 'px' }"><Icon :n="b.i" :s="24" /><span>{{ b.t }}<Icon v-if="b.d" n="tri" :s="9" /></span></button>
        <button class="more" aria-label="更多工具"><Icon n="chevR" :s="12" /></button>
      </div>
      <div class="fx-body">
        <div class="fx-rail"><button v-for="n in rail" :key="n" :aria-label="n"><Icon :n="n" :s="16" /></button></div>
        <div class="canvas">
          <div class="sheets">
            <article class="pg">
              <p class="run">河北省政府采购“双盲”评审项目招标文件示范文本</p>
              <h2>第四部分　采购需求</h2>
              <h3>一、商务标内容</h3>
              <div class="body tall"><p v-for="(l, i) in left" :key="i" :class="lineClass(l)"><Line :t="l.t" /></p></div>
              <p class="no">25</p>
              <div class="redbox"></div>
            </article>
            <article class="pg">
              <p class="run">河北省政府采购“双盲”评审项目招标文件示范文本</p>
              <h3 class="six"><span class="lat">6</span>、其他</h3>
              <div class="body loose"><p v-for="(l, i) in rightA" :key="i" :class="lineClass(l)"><Line :t="l.t" /></p></div>
              <div class="body foot"><p v-for="(l, i) in rightB" :key="i" :class="lineClass(l)"><Line :t="l.t" /></p></div>
              <p class="no">26</p>
            </article>
            <article class="pg next"></article>
            <article class="pg next"></article>
          </div>
          <div class="vbar"><Icon n="triUp" :s="8" /><i></i><Icon n="tri" :s="8" /></div>
          <button class="float" aria-label="转Word"><Icon n="toWord" :s="26" /></button>
        </div>
        <div class="fx-side"><button aria-label="属性"><Icon n="tune" /></button></div>
      </div>
      <footer class="fx-status">
        <button aria-label="导航"><Icon n="bookmark" :s="14" /></button><button aria-label="页面"><Icon n="single" :s="14" /></button>
        <span class="size">A4(210×297mm)</span>
        <div class="go">
          <button aria-label="首页"><Icon n="first" /></button><button aria-label="上一页"><Icon n="chevL" /></button>
          <input value="27 / 77" aria-label="当前页">
          <button aria-label="下一页"><Icon n="chevR" /></button><button aria-label="末页"><Icon n="last" /></button>
        </div>
        <div class="views">
          <button v-for="n in ['one', 'fit', 'wide', 'cont', 'single', 'double']" :key="n" :aria-label="n" :class="{ on: n === 'cont' || n === 'double' }"><Icon :n="n" :s="18" /></button>
          <span class="pct">75%<Icon n="tri" :s="12" /></span>
          <button aria-label="缩小"><Icon n="minusC" :s="18" /></button>
          <input type="range" min="0" max="100" value="38" aria-label="缩放">
          <button aria-label="放大"><Icon n="plusC" :s="18" /></button>
          <button aria-label="全屏"><Icon n="expand" :s="17" /></button>
        </div>
      </footer>
    </section>

    <section class="np-wrap" aria-label="记事本">
      <div class="np-top"><i></i><i></i><i></i></div>
      <div class="np">
        <header><Icon n="notepad" /><span>*学生奶 - 记事本</span>
          <div><button aria-label="最小化"><Icon n="min" /></button><button aria-label="最大化"><Icon n="max" :s="18" /></button><button aria-label="关闭"><Icon n="close" /></button></div>
        </header>
        <nav><button v-for="m in ['文件(F)', '编辑(E)', '格式(O)', '查看(V)', '帮助(H)']" :key="m">{{ m }}</button></nav>
        <div class="np-body">
          <textarea :value="note" aria-label="文本" wrap="off" spellcheck="false"></textarea>
          <div class="np-bar"><Icon n="chevUp" :s="9" /><Icon n="chev" :s="12" /></div>
        </div>
        <footer><span>第 18 行，第 3 列</span><span>100%</span><span>Windows (CRLF)</span><span>UTF-8</span></footer>
        <button class="swirl" aria-label="助手"><Icon n="swirl" :s="40" /></button>
      </div>
    </section>

    <section class="wd" aria-label="Word">
      <header class="wd-title">
        <div class="qat"><button aria-label="保存"><Icon n="qSave" :s="14" /></button><button class="dim" aria-label="撤销"><Icon n="undo" /><Icon n="chev" :s="9" /></button><button class="dim" aria-label="重复"><Icon n="repeat" /></button><button aria-label="自定义"><Icon n="custom" :s="12" /></button></div>
        <h1>投标文件-技术 &nbsp;-&nbsp; Word</h1>
        <div class="wd-win"><button class="login">登录</button><button aria-label="功能区"><Icon n="ribbonopt" :s="14" /></button><button aria-label="最小化"><Icon n="min" :s="14" /></button><button aria-label="还原"><Icon n="restore" :s="14" /></button></div>
      </header>
      <nav class="wd-tabs">
        <button v-for="(t, i) in wordTabs" :key="t" :class="{ on: i === 1 }">{{ t }}</button>
        <button class="tell"><Icon n="bulb" :s="17" />操作说明搜索</button>
        <button class="share" aria-label="共享"><Icon n="share" /></button>
      </nav>
      <div class="rb">
        <div class="g g1">
          <div class="gc">
            <button class="paste"><Icon n="paste" :s="30" /><span>粘贴</span><Icon n="chev" :s="9" /></button>
            <div class="stack"><button class="dis"><Icon n="cut" />剪切</button><button class="dis"><Icon n="copy" />复制</button><button><Icon n="brush" />格式刷</button></div>
          </div>
          <div class="gl">剪贴板<Icon n="launch" :s="9" /></div>
        </div>
        <div class="g g2">
          <div class="gr">
            <span class="sel w1"><select aria-label="字体"><option>宋体</option></select><Icon n="tri" :s="8" /></span>
            <span class="sel w2"><select aria-label="字号"><option>四号</option></select><Icon n="tri" :s="8" /></span>
            <button class="c26 f14">A<sup class="bl">▴</sup></button><button class="c26 f12">A<sup class="bl">▾</sup></button><i class="sp"></i>
            <button class="c42 f13">Aa<Icon n="chev" :s="10" /></button><i class="sp"></i>
            <button class="c26"><Icon n="erase" :s="18" /></button><button class="c26 wen"><span>wén</span><span class="bl">文</span></button><button class="c22"><b class="boxa">A</b></button>
          </div>
          <div class="gr">
            <button class="c22"><b>B</b></button><button class="c26"><em>I</em></button><button class="c38"><u><b>U</b></u><Icon n="chev" :s="10" /></button>
            <button class="c26 f12"><s>abc</s></button><button class="c22"><b>x</b><sub class="bl">2</sub></button><button class="c26"><b>x</b><sup class="bl">2</sup></button><i class="sp"></i>
            <button class="c38"><b class="glow">A</b><Icon n="chev" :s="10" /></button><button class="c38"><span class="bar y">ab</span><Icon n="chev" :s="10" /></button>
            <button class="c38"><b class="bar r">A</b><Icon n="chev" :s="10" /></button><button class="c26"><b class="grey">A</b></button><button class="c22"><span class="ring">字</span></button>
          </div>
          <div class="gl">字体<Icon n="launch" :s="9" /></div>
        </div>
        <div class="g g3">
          <div class="gr"><template v-for="(b, i) in paraA" :key="i"><i v-if="b.sep" class="sp"></i><button v-else :style="{ width: b.w + 'px' }" :aria-label="b.i"><Icon :n="b.i" /><Icon v-if="b.d" n="chev" :s="10" /></button></template></div>
          <div class="gr"><template v-for="(b, i) in paraB" :key="i"><i v-if="b.sep" class="sp"></i><button v-else :class="{ on: b.on }" :style="{ width: b.w + 'px' }" :aria-label="b.i"><Icon :n="b.i" /><Icon v-if="b.d" n="chev" :s="10" /></button></template></div>
          <div class="gl">段落<Icon n="launch" :s="9" /></div>
        </div>
        <div class="g g4">
          <div class="gallery">
            <button v-for="s in styles" :key="s.t" :class="{ on: s.on }"><span class="pv" :class="{ gy: s.g, bg: s.big }">{{ s.p }}</span><span class="nm">{{ s.t }}</span></button>
            <button class="drop" aria-label="更多样式"><Icon n="custom" :s="12" /></button>
          </div>
          <div class="gl">样式<Icon n="launch" :s="9" /></div>
        </div>
        <div class="g g5">
          <div class="stack"><button><Icon n="lensBlue" :s="14" />查找<Icon n="chev" class="far" :s="9" /></button><button><span class="abac">ab<br>ac</span>替换</button><button><Icon n="pointer" />选择<Icon n="chev" :s="9" /></button></div>
          <div class="gl">编辑</div>
        </div>
        <div class="g g6"><button class="add"><i></i><span>加</span><span>载项</span></button><div class="gl">加载项</div></div>
      </div>
      <div class="lic"><Icon n="info" :s="22" /><b>获取正版 OFFICE</b><span>你的许可证并非正版，你可能是盗版软件的受害者。立即通过正版 Office 避免中断并使文件保持安全。</span><button>获取正版 Office</button><button>了解详细信息</button></div>
      <div class="wd-body">
        <aside>
          <div class="nh"><h2>导航</h2><button aria-label="选项"><Icon n="thin" :s="18" /></button><button aria-label="关闭"><Icon n="close" :s="16" /></button></div>
          <label class="find"><input placeholder="在文档中搜索" aria-label="在文档中搜索"><Icon n="lensBlue" :s="15" /><Icon n="chev" :s="8" /></label>
          <div class="nt"><button class="on">标题</button><button>页面</button><button>结果</button></div>
          <ul class="tree"><li v-for="n in tree" :key="n.t" :class="['l' + n.l, { on: n.on }]"><Icon v-if="n.open" n="node" :s="8" /><a href="#">{{ n.t }}</a></li></ul>
        </aside>
        <div class="vr">
          <div class="tabstop">L</div>
          <div class="vrule"><div class="cells"><span v-for="n in vRuler" :key="n"><i></i><b>{{ n }}</b><i></i></span></div></div>
        </div>
        <div class="docs">
          <div class="hrow">
            <div class="hrule"><div class="cells"><span v-for="(n, i) in hRuler" :key="i">{{ n }}</span></div></div>
            <svg class="mk m1" width="12" height="28" viewBox="0 0 12 28"><path d="M1.500 20V13L6 7l4.500 6v7zM1.500 20v7h9v-7" fill="#fff" stroke="#888" /></svg>
            <svg class="mk m2" width="12" height="12" viewBox="0 0 12 12"><path d="M1.500 1h9v5L6 10 1.500 6z" fill="#fff" stroke="#888" /></svg>
            <svg class="mk m3" width="12" height="12" viewBox="0 0 12 12"><path d="M1.500 11h9V6L6 1 1.500 6z" fill="#fff" stroke="#888" /></svg>
          </div>
          <div class="papers">
            <article class="wp">
              <p v-for="(l, i) in wordL" :key="i" :class="lineClass(l)"><Line :t="l.t" /><span v-if="l.e" class="ret">↵</span></p>
              <div class="marks end"><i></i><i></i></div>
            </article>
            <article class="wp">
              <h3><span class="dot">▪</span><span class="num">2.1</span>售后服务承诺<span class="ret">↵</span></h3>
              <p v-for="(l, i) in wordR" :key="i" :class="lineClass(l)"><Line :t="l.t" /><span v-if="l.e" class="ret">↵</span></p>
              <div class="marks end"><i></i><i></i></div>
            </article>
            <article class="wp nx"><div class="marks top"><i></i><i></i></div><p>即停用，并迅速采取补救措施。<span class="ret">↵</span></p></article>
            <article class="wp nx"><div class="marks top"><i></i><i></i></div><h3><span class="dot">▪</span><span class="num">2.2</span>售后服务方案<span class="ret">↵</span></h3></article>
            <p class="callout">建议也加一下</p>
          </div>
        </div>
      </div>
      <footer class="wd-status">
        <span>第 218 页，共 224 页</span><span>87811 个字</span><Icon n="spell" /><span>简体中文(中国大陆)</span><span>修订: 关闭</span><span class="acc"><Icon n="access" />辅助功能: 调查</span>
        <div><button aria-label="阅读视图"><Icon n="read" /></button><button class="on" aria-label="页面视图"><Icon n="layout" /></button><button aria-label="Web 视图"><Icon n="web" /></button><span>−</span><input type="range" min="0" max="100" value="33" aria-label="缩放"></div>
      </footer>
    </section>
  </main>
</template>

<style>
body { background: #0d4a8f; overflow: hidden; }
</style>

<style scoped>
* { box-sizing: border-box; margin: 0; padding: 0; text-spacing-trim: space-all; }
button, input, select, textarea { font: inherit; color: inherit; border: 0; background: none; outline: 0; min-width: 0; }
button { display: flex; align-items: center; white-space: nowrap; flex: none; }
svg { flex: none; display: block; overflow: visible; }
i { font-style: normal; }
ul { list-style: none; }
.desk :deep(.lat) { font-family: "Liberation Serif", serif; line-height: 1; }

.desk { height: 100vh; display: grid; grid-template-columns: 1515fr 408fr 1856fr; font: 12px/16px "Open Sans", "Noto Sans CJK SC", sans-serif; color: #333; overflow: hidden; background: linear-gradient(#0b418c, #1b62a8 30%, #2f86a4 48%, #8a8a78 58%, #35707c 66%, #4e7c80 75%, #075a82); }
.desk > section { display: flex; flex-direction: column; min-width: 0; min-height: 0; overflow: hidden; }

/* PDF reader */
.fx { border-left: 3px solid #47586e; background: #f3f4f6; border-right: 1px solid #22405f; }
.fx-title { height: 32px; padding-top: 2px; display: flex; background: #19334f; flex: none; }
.fx-tab { width: 215px; background: #9ba5b2; color: #444; margin-right: 5px; padding: 0 6px; justify-content: space-between; }
.fx-tab.on { background: #f5f5f5; padding: 0 6px 0 12px; color: #333; }
.fx-tab svg:last-child { color: #666; }
.fx-new { margin-left: 5px; color: #fff; position: relative; }
.fx-new i { position: absolute; right: -1px; top: 4px; width: 4px; height: 4px; border-radius: 50%; background: #ff7a70; }
.fx-win { margin-left: auto; display: flex; gap: 18px; padding-right: 10px; color: #fff; align-items: center; }
.vip { background: linear-gradient(90deg, #ffe27a, #f9bd2d); color: #7a3410; border-radius: 4px 11px 11px 4px; height: 22px; padding: 0 10px 0 0; }
.vip svg { margin: -6px 2px 0 -2px; }
.fx-menu { height: 35px; display: flex; align-items: center; background: #f5f5f5; border-bottom: 1px solid #d8d8d8; flex: none; }
.file { width: 72px; padding-left: 14px; gap: 5px; border-right: 1px solid #ddd; height: 20px; }
.quick { display: flex; width: 190px; gap: 9px; padding-left: 11px; border-right: 1px solid #ddd; height: 20px; }
.off { color: #c4c4c4; }
.m { width: 62px; justify-content: center; height: 26px; }
.m.on { color: #e8412f; font-weight: 600; border-bottom: 2px solid #e8412f; width: 34px; margin: 0 14px 0 16px; }
.pill { margin-left: 1px; width: 100px; height: 26px; border-radius: 13px; background: #e6e7f0; display: flex; align-items: center; padding-left: 9px; gap: 5px; color: #999; }
.pill input { width: 66px; }
.pill input::placeholder { color: #8c8c8c; }
.fx-right { margin-left: auto; display: flex; gap: 26px; padding-right: 11px; }
.fx-tools { height: 60px; display: flex; background: #f5f5f5; border-bottom: 2px solid #d6d7d9; position: relative; flex: none; overflow: hidden; }
.pick { width: 83px; padding: 2px 10px 0; display: flex; flex-direction: column; gap: 4px; }
.pick button { width: 63px; height: 24px; gap: 4px; padding-left: 4px; border: 1px solid transparent; }
.pick button.on { background: #e9e9f2; border-color: #c6c9de; height: 26px; }
.fx-tools .big { flex-direction: column; align-items: center; padding-top: 8px; gap: 6px; }
.big span { display: flex; align-items: center; gap: 1px; }
.pick + .big { margin-left: 8px; }
.zoomer { width: 140px; margin-left: 15px; padding: 4px 0 0 15px; display: flex; flex-direction: column; gap: 9px; }
.zoomer .row { display: flex; align-items: center; justify-content: space-between; height: 20px; padding-left: 2px; }
.combo { display: flex; border: 1px solid #ddd; background: #fff; height: 20px; width: 79px; }
.combo input { width: 62px; text-align: center; }
.combo i { width: 15px; background: #dcdcdc; color: #888; display: flex; align-items: center; justify-content: center; }
.rot { width: 92px; margin-left: -7px; }
.pager { width: 176px; padding: 4px 0 0; display: flex; flex-direction: column; gap: 7px; margin-left: 6px; }
.pager .row { display: flex; align-items: center; gap: 7px; height: 20px; }
.pager .row > input { width: 108px; height: 20px; background: #fff; border: 1px solid #e2e2e2; text-align: center; }
.row.modes { gap: 1px; height: 22px; }
.modes button { height: 22px; gap: 3px; border: 1px solid transparent; padding: 0 3px 0 4px; width: 52px; }
.modes button:first-child { padding-left: 2px; width: 50px; }
.modes button.on { background: #e9e9f2; border-color: #c6c9de; }
.pens { width: 70px; padding-top: 4px; display: flex; flex-direction: column; gap: 9px; margin-left: 4px; }
.pens button { gap: 4px; height: 20px; }
.aa { font: 15px/17px "Liberation Serif", serif; border-bottom: 3px solid #f5a34a; width: 16px; }
.more { position: absolute; right: 0; top: 0; bottom: 0; width: 13px; background: #dcdcdc; color: #444; }
.fx-body { flex: 1; display: flex; min-height: 0; }
.fx-rail { width: 32px; border-right: 1px solid #c9cacc; background: #f3f4f6; padding: 19px 0 0 5px; display: flex; flex-direction: column; gap: 24px; }
.canvas { flex: 1; min-width: 0; position: relative; display: flex; justify-content: center; overflow: hidden; }
.sheets { margin: 0 auto; display: grid; grid-template-columns: 596px 597px; column-gap: 7px; row-gap: 7px; grid-template-rows: 844px 200px; background: #e2e3e3; box-shadow: 0 0 8px #d0d0d0; align-self: flex-start; }
.pg { background: #fff; padding: 43px 78px 0 79px; position: relative; font-family: "Noto Sans CJK SC", sans-serif; color: #333; }
.run { font-size: 9px; line-height: 13px; text-align: right; border-bottom: 1px solid #000; padding-right: 2px; color: #555; margin: 0 -1px; }
.pg h2 { font-size: 15px; line-height: 20px; text-align: center; margin-top: 14px; color: #000; }
.pg h3 { font-size: 13px; line-height: 20px; padding-left: 25px; color: #000; }
.pg .six { margin-top: 14px; line-height: 20px; margin-bottom: 8px; font-size: 12px; }
.pg .no { text-align: center; font: 9px/12px "Liberation Serif", serif; margin-top: 18px; color: #000; }
.body { display: grid; grid-auto-rows: 1fr; align-items: center; width: 433px; margin-left: 1px; }
.body p, .wp p { white-space: nowrap; }
.body p { line-height: 20px; }
.ind { padding-left: 24px; }
.jus { text-align: justify; text-align-last: justify; }
.bold { font-weight: 700; color: #000; }
.und, .body :deep(.k-u) { text-decoration: underline 1px #000; text-underline-offset: 3px; }
.tall { height: 653px; }
.loose { height: 520px; }
.foot { height: 164px; margin-top: -6px; }
.foot + .no { margin-top: 5px; }
.redbox { position: absolute; left: 60px; top: 498px; width: 497px; height: 228px; border: 4px solid #d01124; }
.vbar { width: 15px; padding: 8px 3px; display: flex; flex-direction: column; justify-content: space-between; color: #bbb; position: relative; }
.vbar i { position: absolute; top: 288px; left: 3px; width: 8px; height: 60px; border-radius: 4px; background: #d2d3d5; }
.float { position: absolute; right: 28px; top: 12px; width: 38px; height: 38px; border-radius: 50%; background: #ee7468; border: 2px solid #f9d5d1; justify-content: center; box-shadow: 0 3px 5px #f3c0bb; }
.fx-side { width: 37px; border-left: 1px solid #c9cacc; padding: 20px 0 0 10px; }
.fx-status { height: 28px; border-top: 1px solid #c9cacc; background: #efefef; display: flex; align-items: center; flex: none; color: #666; padding-left: 17px; gap: 16px; }
.size { margin-left: 16px; }
.go { display: flex; align-items: center; gap: 15px; margin-left: auto; color: #666; }
.go input { width: 107px; height: 20px; background: #fff; border: 1px solid #e2e2e2; text-align: center; color: #333; margin: 0 -5px; }
.views { display: flex; align-items: center; gap: 7px; margin-left: 116px; padding-right: 20px; }
.views button { height: 24px; padding: 0 2px; }
.views button.on { background: #e0e1ec; border: 1px solid #c6c9de; }
.pct { display: flex; align-items: center; gap: 7px; width: 52px; margin: 0 10px 0 12px; }
input[type=range] { appearance: none; height: 14px; }
.views input { width: 92px; background: linear-gradient(90deg, #555 38%, #ccc 0) center / 100% 3px no-repeat; }
.views input::-webkit-slider-thumb { appearance: none; width: 9px; height: 12px; border: 1px solid #666; border-radius: 5px; background: #fff; }

/* Notepad */
.np-wrap { padding-right: 6px; }
.np-top { height: 10px; flex: none; background: linear-gradient(90deg, #16325a, #0c4a94 30%, #0a4da6); display: flex; align-items: flex-end; gap: 60px; padding-left: 188px; overflow: hidden; }
.np-top i { width: 16px; height: 3px; background: #d8e2ec; flex: none; }
.np { flex: 1; display: flex; flex-direction: column; background: #fff; min-height: 0; position: relative; }
.np header { height: 29px; display: flex; align-items: center; gap: 5px; padding-left: 8px; color: #999; flex: none; }
.np header div { margin-left: auto; display: flex; gap: 29px; padding-right: 15px; }
.np nav { height: 21px; display: flex; gap: 14px; padding-left: 7px; color: #666; border-bottom: 2px solid #f0f0f0; flex: none; }
.np-body { flex: 1; display: flex; min-height: 0; }
.np textarea { flex: 1; resize: none; overflow: hidden; white-space: pre; padding: 2px 0 0 3px; font: 16px/21px "Noto Sans CJK SC", sans-serif; color: #000; }
.np-bar { width: 16px; background: #f0f0f0; color: #aaa; display: flex; flex-direction: column; justify-content: space-between; align-items: center; padding: 4px 0 3px; }
.np footer { height: 16px; background: #f0f0f0; border-top: 1px solid #d9d9d9; display: flex; flex: none; overflow: hidden; line-height: 22px; white-space: nowrap; }
.np footer span { border-right: 1px solid #d0d0d0; padding-left: 10px; width: 50px; }
.np footer span:nth-child(1) { width: 111px; }
.np footer span:nth-child(3) { width: 120px; }
.np footer span:nth-child(4) { border: 0; }
.swirl { position: absolute; right: -5px; top: 676px; }

/* Word */
.wd { background: #e6e6e6; }
.wd-title { height: 32px; display: flex; align-items: center; justify-content: space-between; background: #2b579a; color: #fff; flex: none; }
.qat { display: flex; gap: 15px; padding-left: 22px; align-items: center; }
.qat .dim { color: #6285bc; gap: 3px; }
.qat button:last-child { margin-left: 7px; }
.wd-title h1 { font-size: 12px; line-height: 16px; font-weight: 400; color: #b9c8e0; }
.wd-win { display: flex; align-items: center; margin-right: -2px; gap: 32px; color: #c8d4e8; }
.login { background: #a3b6d6; color: #2b579a; width: 46px; height: 19px; justify-content: center; }
.wd-tabs { height: 30px; display: flex; background: #2b579a; color: #fff; padding-left: 5px; flex: none; }
.wd-tabs button { min-width: 51px; justify-content: center; }
.wd-tabs button:first-child { width: 56px; padding-right: 8px; }
.wd-tabs button.on { background: #f3f3f3; color: #2b579a; font-weight: 600; min-width: 49px; }
.wd-tabs button:nth-child(11) { min-width: 70px; }
.wd-tabs .tell { gap: 12px; margin-left: 10px; }
.wd-tabs .share { margin: 3px 0 3px auto; min-width: 12px; width: 12px; justify-content: flex-start; border: 1px solid #fff; border-right: 0; overflow: hidden; }
.rb { height: 95px; background: #f3f3f3; border-bottom: 1px solid #c6c6c6; display: flex; padding: 4px 0; flex: none; }
.g { border-right: 1px solid #999; display: flex; flex-direction: column; padding-top: 3px; height: 86px; flex: none; }
.gl { margin-top: auto; display: flex; justify-content: center; height: 20px; line-height: 20px; position: relative; }
.gl svg { position: absolute; right: 5px; bottom: 2px; }
.g1 { width: 123px; } .g2 { width: 344px; padding-left: 7px; } .g3 { width: 291px; padding-left: 7px; } .g4 { flex: 1; padding: 2px 10px 0; } .g5 { width: 93px; padding-left: 12px; } .g6 { width: 58px; }
.rb > .g6 { margin-right: 36px; }
.gc { display: flex; padding-left: 15px; gap: 6px; }
.paste { flex-direction: column; width: 32px; align-items: flex-start; }
.paste span { margin-top: 4px; }
.paste svg:last-child { margin: 1px 0 0 9px; }
.stack { display: flex; flex-direction: column; }
.stack button { height: 23px; gap: 3px; }
.stack .dis { color: #aaa; }
.far { margin-left: 12px; }
.abac { font: 8px/8px "Liberation Sans", sans-serif; color: #3c6fb0; width: 14px; text-align: left; }
.gr { display: flex; align-items: center; height: 31px; }
.gr button { height: 24px; justify-content: center; font-family: "Liberation Sans", sans-serif; font-size: 14px; gap: 3px; color: #444; }
.gr button.on { background: #c0c0c0; border: 1px solid #888; }
.sp { width: 1px; height: 22px; background: #d0d0d0; flex: none; }
.sel { display: flex; align-items: center; border: 1px solid #aaa; background: #fff; height: 23px; padding: 0 4px; flex: none; }
.sel select { appearance: none; flex: 1; }
.w1 { width: 106px; margin-right: 3px; } .w2 { width: 47px; }
.gr .f14 { font-size: 15px; } .gr .f13 { font-size: 13px; } .gr .f12 { font-size: 12px; }
.c22 { width: 22px; } .c26 { width: 25px; } .c38 { width: 39px; } .c42 { width: 44px; }
.bl { color: #3c6fb0; }
sup, sub { font-size: 8px; line-height: 8px; }
sup { align-self: flex-start; margin: 2px 0 0 -4px; } sub { align-self: flex-end; margin-left: -3px; }
.gr .wen { flex-direction: column; gap: 0; font-size: 9px; line-height: 10px; }
.wen .bl { font: 11px/12px "Noto Sans CJK SC", sans-serif; }
.boxa { border: 1px solid #3c6fb0; width: 16px; line-height: 15px; font-weight: 400; }
.glow { color: #fff; text-shadow: 0 0 2px #2b6fc0, 0 0 2px #2b6fc0, 0 0 2px #2b6fc0; font-size: 17px; }
.bar { line-height: 15px; border-bottom: 4px solid #f9f500; width: 16px; }
.bar.r { border-color: #e80000; }
.grey { background: #c0c0c0; width: 14px; line-height: 16px; }
.ring { border: 1px solid #666; border-radius: 50%; width: 16px; height: 16px; font: 10px/14px "Noto Sans CJK SC", sans-serif; }
.gallery { display: flex; background: #fff; border: 1px solid #c6c6c6; height: 60px; }
.gallery button { flex: 1; flex-direction: column; justify-content: space-between; padding: 5px 0 4px; overflow: hidden; border: 1px solid transparent; }
.gallery button.on { border: 2px solid #b0b0b0; padding: 4px 0 3px; }
.gallery .drop { flex: 0 0 24px; border: 1px solid #888; justify-content: center; }
.pv { font: 17px/28px "Liberation Serif", "Noto Sans CJK SC", serif; color: #000; }
.pv.gy { color: #777; } .pv.bg { font: 26px/28px "Open Sans", sans-serif; font-weight: 300; }
.nm { color: #555; }
.g6 .add { flex-direction: column; line-height: 15px; padding-top: 10px; }
.add i { width: 10px; height: 10px; border-radius: 50%; background: #ff9500; margin-bottom: 17px; }
.lic { height: 30px; background: #fcf7b6; border: 1px solid #b38a06; border-width: 1px 0; display: flex; align-items: center; padding-left: 9px; gap: 9px; flex: none; white-space: nowrap; }
.lic button { height: 23px; border: 1px solid #aaa; background: #fff; width: 107px; justify-content: center; }
.lic span + button { width: 120px; margin-left: 8px; }
.wd-body { flex: 1; display: flex; min-height: 0; }
aside { width: 280px; border-right: 1px solid #c0c0c0; flex: none; padding: 12px 18px 0 14px; overflow: hidden; display: flex; flex-direction: column; }
.nh { display: flex; align-items: center; height: 28px; gap: 23px; flex: none; }
.nh h2 { font-size: 21px; line-height: 28px; font-weight: 400; margin-right: auto; }
.find { display: flex; align-items: center; height: 26px; border: 1px solid #b5b5b5; background: #fff; margin-top: 16px; padding: 0 3px 0 6px; gap: 4px; flex: none; }
.find input { flex: 1; }
.find input::placeholder { color: #666; }
.nt { display: flex; gap: 25px; margin-top: 17px; flex: none; }
.nt button { height: 26px; align-items: flex-start; border-bottom: 3px solid transparent; line-height: 16px; }
.nt .on { color: #2b579a; font-weight: 700; border-color: #2b579a; }
.tree { margin: 3px -4px 0 -14px; overflow: hidden; display: flex; flex-direction: column; }
.tree li { height: 21px; line-height: 20px; display: flex; align-items: center; justify-content: flex-start; white-space: nowrap; flex: none; }
.tree li:first-child { margin-top: -9px; }
.tree a { color: #444; text-decoration: none; }
.tree svg { width: 8px; margin: 0 9px 0 -17px; color: #444; }
.l1 { padding-left: 51px; } .l2 { padding-left: 67px; } .l3 { padding-left: 83px; } .l4 { padding-left: 99px; } .l5 { padding-left: 115px; }
.tree .on { background: #c2d5f2; margin: 0 17px 0 62px; padding-left: 5px; }
.vr { width: 25px; padding: 3px 0 0 3px; flex: none; }
.tabstop { width: 22px; height: 20px; background: #fff; border: 2px solid #d6d6d6; text-align: center; font: bold 10px/16px "Liberation Sans", sans-serif; color: #555; }
.vrule { margin: 7px 0 0 2px; width: 17px; height: 695px; background: linear-gradient(#fff 638px, #c4c4c4 0); overflow: hidden; }
.vrule .cells { display: grid; grid-auto-rows: 1fr; height: 710px; margin-top: -7px; }
.vrule span { display: flex; flex-direction: column; align-items: center; justify-content: center; gap: 3px; }
.vrule i { width: 6px; height: 1px; background: #555; }
.vrule b { writing-mode: vertical-rl; transform: rotate(180deg); font: 9px/10px "Liberation Sans", sans-serif; color: #444; }
.docs { flex: 1; min-width: 0; padding-left: 242px; overflow: hidden; }
.hrow { height: 30px; padding: 5px 0 0 564px; position: relative; }
.hrule { width: 553px; height: 16px; background: linear-gradient(90deg, #c4c4c4 52px, #fff 0 500px, #c4c4c4 0); overflow: hidden; }
.hrule .cells { display: flex; margin-left: -13px; font: 9px/17px "Liberation Sans", sans-serif; color: #444; }
.hrule span { flex: 0 0 26px; text-align: center; }
.mk { position: absolute; }
.m1 { left: 610px; top: 2px; } .m2 { left: 636px; top: 1px; } .m3 { left: 1059px; top: 12px; }
.papers { display: grid; grid-template-columns: 553px 552px; grid-template-rows: 692px 200px; gap: 11px 12px; position: relative; width: 1117px; }
.wp { background: #fff; outline: 1px solid #c8c8c8; padding: 7px 51px 0 53px; font: 13px/28px "Noto Sans CJK SC", sans-serif; color: #111; display: flex; flex-direction: column; }
.wp .ind { padding-left: 26px; }
.wp p { flex: none; height: 28px; }
.wp h3 { font-size: 15px; line-height: 28px; height: 28px; font-weight: 400; position: relative; flex: none; }
.num { display: inline-block; width: 40px; line-height: 1; font-family: "Liberation Serif", serif; }
.dot { position: absolute; left: -6px; font-size: 8px; }
.ret { color: #999; font-size: 10px; line-height: 1; }
.wp :deep(.k-r) { text-decoration: underline wavy #e33 1px; text-underline-offset: 2px; }
.wp :deep(.k-b) { text-decoration: underline wavy #36c 1px; text-underline-offset: 2px; }
.marks { display: flex; justify-content: space-between; margin: 0 -16px; flex: none; }
.marks i { width: 16px; height: 16px; border: 0 solid #a8a8a8; }
.marks.end { margin-top: auto; margin-bottom: 36px; }
.end i:first-child { border-width: 1px 1px 0 0; }
.end i:last-child { border-width: 1px 0 0 1px; }
.wp.nx { padding-top: 48px; }
.marks.top { margin-bottom: 5px; }
.top i:first-child { border-width: 0 1px 1px 0; }
.top i:last-child { border-width: 0 0 1px 1px; }
.callout { position: absolute; left: 271px; top: 495px; font: 60px/72px "Noto Sans CJK SC", sans-serif; color: #d01124; white-space: nowrap; }
.wd-status { height: 19px; background: #f3f3f3; border-top: 1px solid #c6c6c6; display: flex; align-items: center; padding: 2px 0 0 12px; gap: 19px; flex: none; white-space: nowrap; color: #444; }
.acc { display: flex; align-items: center; margin-left: 6px; }
.wd-status div { margin-left: auto; display: flex; align-items: center; }
.wd-status button { width: 41px; justify-content: center; height: 18px; }
.wd-status button.on { background: #c8c8c8; }
.wd-status div span { width: 18px; text-align: center; }
.wd-status input { width: 102px; background: linear-gradient(#555, #555) center / 100% 1px no-repeat; }
.wd-status input::-webkit-slider-thumb { appearance: none; width: 5px; height: 11px; background: #444; }
</style>
